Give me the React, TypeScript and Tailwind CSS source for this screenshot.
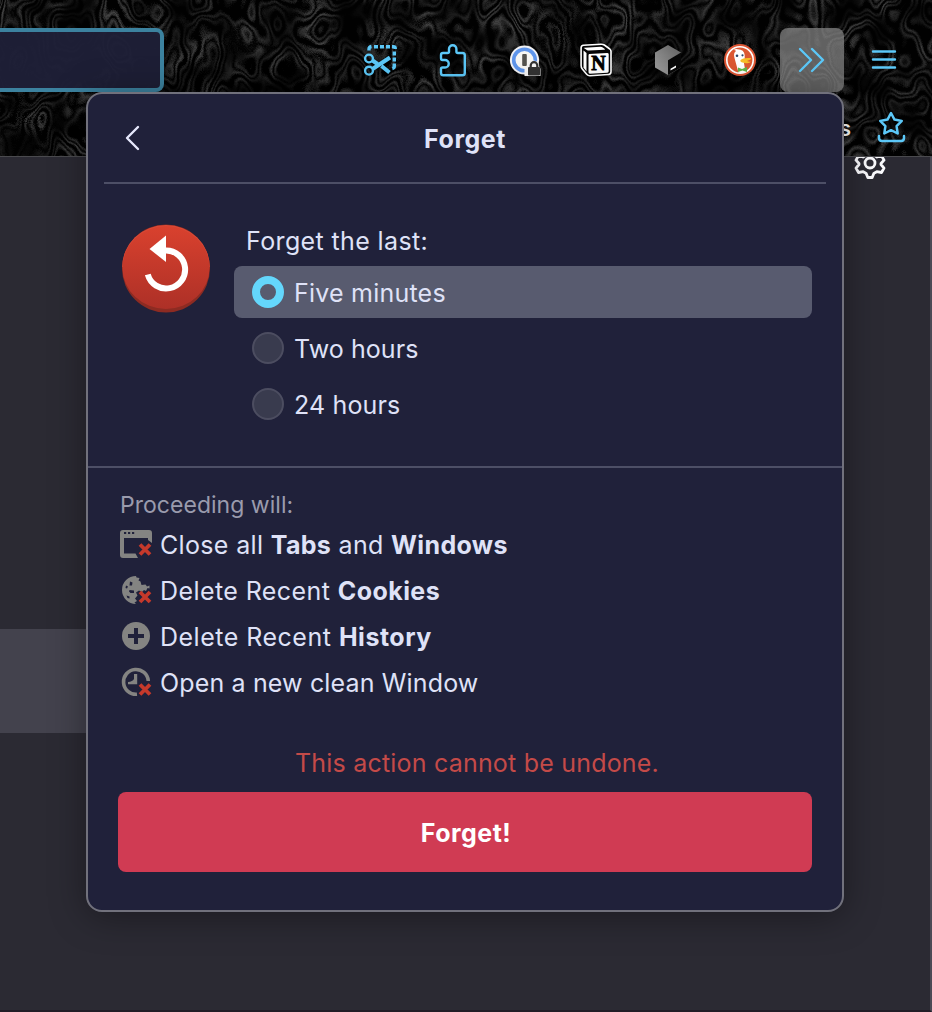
import type { ReactNode } from "react";

const BLUE = "#5cc8f8";

function Texture() {
  return (
    <svg className="absolute inset-0 h-full w-full" aria-hidden="true">
      <filter id="contours" x="0" y="0" width="100%" height="100%" colorInterpolationFilters="sRGB">
        <feTurbulence type="fractalNoise" baseFrequency="0.018 0.012" numOctaves="3" seed="11" />
        <feColorMatrix type="matrix" values="1 0 0 0 0  1 0 0 0 0  1 0 0 0 0  0 0 0 0 1" />
        <feComponentTransfer>
          <feFuncR type="table" tableValues="0 0 0 0 0 0 0 .3 0 0 .25 0 .35 0 0 .3 0 .35 0 0 .3 0 .3 0 0 .35 0 .25 0 0 .3 0 0 0 0 0 0 0" />
          <feFuncG type="table" tableValues="0 0 0 0 0 0 0 .3 0 0 .25 0 .35 0 0 .3 0 .35 0 0 .3 0 .3 0 0 .35 0 .25 0 0 .3 0 0 0 0 0 0 0" />
          <feFuncB type="table" tableValues="0 0 0 0 0 0 0 .3 0 0 .25 0 .35 0 0 .3 0 .35 0 0 .3 0 .3 0 0 .35 0 .25 0 0 .3 0 0 0 0 0 0 0" />
        </feComponentTransfer>
        <feGaussianBlur stdDeviation="0.6" result="lines" />
        <feTurbulence type="fractalNoise" baseFrequency="0.03" numOctaves="2" seed="4" />
        <feColorMatrix type="matrix" values="2.6 0 0 0 -.8  2.6 0 0 0 -.8  2.6 0 0 0 -.8  0 0 0 0 1" result="shade" />
        <feComposite in="lines" in2="shade" operator="arithmetic" k1="0.65" k2="0.1" k3="0" k4="0" />
      </filter>
      <rect width="100%" height="100%" filter="url(#contours)" />
    </svg>
  );
}

function ToolButton({ children, active = false }: { children: ReactNode; active?: boolean }) {
  return (
    <button
      className={
        active
          ? "flex size-16 items-center justify-center rounded-lg bg-[#8a8a8a]/70"
          : "flex size-16 items-center justify-center rounded-lg"
      }
    >
      {children}
    </button>
  );
}

function ScissorsIcon() {
  return (
    <svg width="36" height="36" viewBox="0 0 36 36" fill="none" stroke={BLUE}>
      <path d="M7 8.500V7q0-2 2.500-2.500M12 4.700h4M18 4.700h4M24 4.700h4M30 4.700h1.500q1.800 0 1.800 2.300M32.300 9.500v4M32.300 15.500v4M32.300 21.500v3q0 1.500-2 2" strokeWidth="3.400" />
      <circle cx="7" cy="16.500" r="3.900" strokeWidth="2.400" />
      <circle cx="7" cy="28.700" r="3.900" strokeWidth="2.400" />
      <path d="M10.500 18.500l5 3.500M10.500 27l17.500-11.500M19.500 24l8 6.500" strokeWidth="4" />
    </svg>
  );
}

function PuzzleIcon() {
  return (
    <svg width="36" height="36" viewBox="0 0 36 36" fill="none" stroke={BLUE} strokeWidth="2.400" strokeLinejoin="round">
      <path d="M7 16v-3q0-2 2-2h4.500q1.500 0 1.500-1.500V7a3.700 3.700 0 0 1 7.400 0v2.500q0 1.500 1.500 1.500h4.600q2.300 0 2.300 2.300v17.700q0 2.300-2.300 2.300H9.300Q7 33.300 7 31v-4q0-1.500 1.500-1.500H11a3.700 3.700 0 0 0 0-7.500H8.500Q7 18 7 16z" />
    </svg>
  );
}

function PasswordIcon() {
  return (
    <svg width="36" height="36" viewBox="0 0 36 36">
      <circle cx="18.500" cy="18" r="14.600" fill="#f1f1f3" />
      <circle cx="18.500" cy="18" r="10.800" fill="#f7f6f3" stroke="#5f95ea" strokeWidth="3.600" />
      <rect x="16.200" y="12" width="4.600" height="12" rx="1" fill="#54534f" />
      <path d="M18.500 34v-6.500q0-2 3-2 .5-7 6-7t6 7q1 0 1 2V34z" fill="#f5f5f5" />
      <path d="M24.700 26v-2.500a3.300 3.300 0 0 1 6.600 0V26" fill="none" stroke="#333" strokeWidth="2.200" />
      <rect x="22" y="25" width="12" height="8.500" rx="1" fill="#333" />
    </svg>
  );
}

function NotionIcon() {
  return (
    <svg width="36" height="36" viewBox="0 0 36 36">
      <path d="M5.500 3.300L23 2.200q2-.1 3.300.8l5.500 4q1.200 1 1.200 2.500v20.300q0 2.500-2.500 2.700L12 33.700q-2 .1-3.100-1.200L4.300 27q-1.200-1.500-1.200-3.500V5.800q0-2.300 2.400-2.500z" fill="#050505" stroke="#fff" strokeWidth="1.600" />
      <path d="M6.500 5.700l16-1q1.300 0 2.300.7l2 1.500q.8.700-.6.800L11 8.600q-1.300 0-2.200-.7L6.200 6.300q-.7-.5.300-.6z" fill="#fff" />
      <path d="M11.200 12l18-1.100q1.500 0 1.500 1.400v17q0 1.300-1.400 1.400l-17.300 1q-1.500.1-1.500-1.400V13.400q0-1.300.7-1.400z" fill="#fff" />
      <path d="M5.500 8.500l3 2.500v18.500l-3-3.700z" fill="#fff" />
      <text x="20.500" y="28.200" textAnchor="middle" fontFamily="Liberation Serif, serif" fontWeight="700" fontSize="20" stroke="#000" strokeWidth=".8">N</text>
    </svg>
  );
}

function CubeIcon() {
  return (
    <svg width="36" height="36" viewBox="0 0 36 36">
      <defs>
        <linearGradient id="cube" x1="1" y1="0" x2="0" y2="1">
          <stop offset="0" stopColor="#606060" />
          <stop offset="1" stopColor="#a0a0a0" />
        </linearGradient>
      </defs>
      <path d="M18 3l13 7.500v15L18 33 5 25.500v-15z" fill="url(#cube)" />
      <path d="M31 10.500v15L18 33V18.200z" fill="#080808" />
      <path d="M20.500 26.700l5.500-3.200v2l-5.500 3z" fill="#fff" />
    </svg>
  );
}

function DuckIcon() {
  return (
    <svg width="36" height="36" viewBox="0 0 36 36">
      <circle cx="18" cy="18" r="16" fill="#dd5634" />
      <circle cx="18" cy="18" r="13.200" fill="#dc5832" stroke="#fff" strokeWidth="1.600" />
      <path d="M16.500 30.700L12.500 16q-1.500-5 1.500-7-1-1.200-2.300-1 2-1.500 4-.8 6.500 0 7 6 .3 4-.7 8l1.500 9q-2.500 1.500-7 .5z" fill="#fff" />
      <circle cx="15" cy="13.800" r="1.300" fill="#2c4569" />
      <circle cx="20.500" cy="13.300" r="1.100" fill="#2c4569" />
      <path d="M18.500 18q2.500-2.500 9.500-2 2.500.3 0 1.800l-3 1.200q2 .8 4 .6-1.500 2.500-6.500 1.400-5-.600-4-3z" fill="#f8bd28" />
      <path d="M16 25.500l4 1.500 5-2v5l-4.500-1.500L16 30z" fill="#60b548" />
    </svg>
  );
}

function ResetIcon() {
  return (
    <svg className="mt-10 ml-[34px] shrink-0" width="88" height="90" viewBox="0 0 88 90">
      <defs>
        <linearGradient id="red" x1="0" y1="0" x2="0" y2="1">
          <stop offset="0" stopColor="#d9412e" />
          <stop offset="1" stopColor="#ad3027" />
        </linearGradient>
      </defs>
      <circle cx="44" cy="44.500" r="44" fill="#8d2b22" />
      <path d="M.2 43a43.800 42 0 0 1 87.600 0z" fill="#d94b38" />
      <ellipse cx="44" cy="43.500" rx="43.600" ry="41.500" fill="url(#red)" />
      <path d="M43.500 26.500A19 19 0 1 1 25.800 50.500" fill="none" stroke="#fff" strokeWidth="6" />
      <path d="M27.500 25L44 11.500v26.500z" fill="#fff" />
    </svg>
  );
}

function RedCross() {
  return <path d="M20 16.500l10 10M30 16.500l-10 10" stroke="#c6392b" strokeWidth="3.800" />;
}

function TabsIcon() {
  return (
    <svg className="shrink-0" width="32" height="32" viewBox="0 0 32 32">
      <path fillRule="evenodd" fill="#848482" d="M3 2h26q3 0 3 3v10l-4-3V10H4v15.500h11.500L18 30H3q-3 0-3-3V5q0-3 3-3z" />
      <path d="M4 4h2.200v2H4zM8 4h2.200v2H8zM12 4h2.200v2H12z" fill="#20213a" />
      <g><RedCross /></g>
    </svg>
  );
}

function CookieIcon() {
  return (
    <svg className="shrink-0" width="32" height="32" viewBox="0 0 32 32">
      <path fill="#848482" d="M16 2A14 14 0 0 0 16 30l-1.500-1.500 2.500-1.500-2-2.500 2.500-3-1.500-3 3-2 3 1.500 2-2 2 1 1.500-3 2 .5v-3l-2.500 1-1.500-2-4 .5-1-3.500-2-1 1-2.500-3-.5z" />
      <path fill="#20213a" d="M10 7.500l2.500 1-.5 3H9.500zM6 11.500l2 1-1 2-1.500-.5zM9.500 16l4.500.5V19h-3.500L9 17.500zM6.500 21.500l3 1v2l-2-.5z" />
      <g transform="translate(0 1.500)"><RedCross /></g>
    </svg>
  );
}

function PlusIcon() {
  return (
    <svg className="shrink-0" width="32" height="32" viewBox="0 0 32 32">
      <circle cx="16" cy="16" r="14" fill="#848482" />
      <path d="M16 8v16M8 16h16" stroke="#20213a" strokeWidth="4" />
    </svg>
  );
}

function ClockIcon() {
  return (
    <svg className="shrink-0" width="32" height="32" viewBox="0 0 32 32">
      <path d="M28.300 15A12.400 12.400 0 1 0 17 28.200" fill="none" stroke="#848482" strokeWidth="3.600" />
      <path d="M14 8h3.200v10.200H8V16q4.500-.3 6-3z" fill="#848482" />
      <g transform="translate(0 2)"><RedCross /></g>
    </svg>
  );
}

function Option({ label, tracking, selected = false }: { label: string; tracking: string; selected?: boolean }) {
  return (
    <label className={selected ? "flex h-[52px] items-center rounded-lg bg-[#585b6f] pl-[18px]" : "flex h-[52px] items-center rounded-lg pl-[18px]"}>
      <span
        className={
          selected
            ? "size-8 shrink-0 rounded-full border-8 border-[#64d7fc] bg-[#585b6f]"
            : "size-8 shrink-0 rounded-full border-2 border-[#4c4d60] bg-[#393b4e]"
        }
      />
      <span className={`ml-2.5 pt-0.5 ${tracking}`}>{label}</span>
    </label>
  );
}

function Effect({ icon, tracking, children }: { icon: ReactNode; tracking: string; children: ReactNode }) {
  return (
    <li className="flex h-[46px] items-center">
      {icon}
      <span className={`ml-2 pt-px whitespace-pre ${tracking}`}>{children}</span>
    </li>
  );
}

function ForgetPanel() {
  return (
    <section className="absolute top-[92px] left-[86px] flex h-[820px] w-[758px] flex-col rounded-2xl border-2 border-[#71717c] bg-[#20213a] text-[25px] leading-8 font-[430] text-[#dfe2f7] shadow-[0_4px_36px_rgba(0,0,0,0.38)]">
      <header className="mx-4 flex h-[90px] items-center border-b-2 border-[#4d4f66]">
        <svg className="ml-5 shrink-0" width="18" height="28" viewBox="0 0 18 28" fill="none" stroke="#e6e8fb" strokeWidth="2.400" strokeLinecap="round" strokeLinejoin="round">
          <path d="M14 3L3 14l11 11" />
        </svg>
        <h1 className="mr-[38px] flex-1 pt-px text-center font-bold tracking-[0.55px]">Forget</h1>
      </header>
      <div className="flex h-[284px] border-b-2 border-[#4d4f66]">
        <ResetIcon />
        <div className="mt-[41px] mr-[30px] ml-6 flex flex-1 flex-col">
          <p className="mb-[9px] pl-3 tracking-[0.38px]">Forget the last:</p>
          <div className="flex flex-col gap-1">
            <Option label="Five minutes" tracking="tracking-[0.22px]" selected />
            <Option label="Two hours" tracking="tracking-[0.08px]" />
            <Option label="24 hours" tracking="tracking-[0.15px]" />
          </div>
        </div>
      </div>
      <div className="px-8 pt-[21px]">
        <p className="text-[23px] tracking-[0.03px] text-[#9a9bad]">Proceeding will:</p>
        <ul>
          <Effect icon={<TabsIcon />} tracking="tracking-[0.34px]">Close all <b className="font-bold">Tabs</b> and <b className="font-bold">Windows</b></Effect>
          <Effect icon={<CookieIcon />} tracking="tracking-[0.42px]">Delete Recent <b className="font-bold">Cookies</b></Effect>
          <Effect icon={<PlusIcon />} tracking="tracking-[0.5px]">Delete Recent <b className="font-bold">History</b></Effect>
          <Effect icon={<ClockIcon />} tracking="tracking-[0.15px]">Open a new clean Window</Effect>
        </ul>
      </div>
      <p className="mt-[42px] pl-6 text-center tracking-[0.2px] text-[#c44a48]">This action cannot be undone.</p>
      <button className="mx-[30px] mt-[13px] h-20 shrink-0 rounded-lg bg-[#d03b53] pt-0.5 pl-0.5 font-bold tracking-[0.45px] text-white">Forget!</button>
    </section>
  );
}

export default function App() {
  return (
    <div className="relative flex h-[1012px] w-[932px] flex-col overflow-hidden bg-[#2b2a33] font-['Inter',sans-serif]">
      <div className="relative h-[157px] shrink-0 overflow-hidden border-b border-[#4a4a4e] bg-[#050505]">
        <Texture />
        <div className="relative flex h-[92px] items-start justify-between pt-7 pr-4">
          <div className="h-16 w-[164px] rounded-r-lg border-4 border-l-0 border-[#3c829f] bg-[#1f2038]/95" />
          <div className="flex gap-2">
            <ToolButton><ScissorsIcon /></ToolButton>
            <ToolButton><PuzzleIcon /></ToolButton>
            <ToolButton><PasswordIcon /></ToolButton>
            <ToolButton><NotionIcon /></ToolButton>
            <ToolButton><CubeIcon /></ToolButton>
            <ToolButton><DuckIcon /></ToolButton>
            <ToolButton active>
              <svg className="mr-0.5" width="28" height="28" viewBox="0 0 28 28" fill="none" stroke={BLUE} strokeWidth="2.400" strokeLinecap="round" strokeLinejoin="round">
                <path d="M3 3l11 11L3 25M15 3l11 11L15 25" />
              </svg>
            </ToolButton>
            <ToolButton>
              <svg width="26" height="24" viewBox="0 0 26 24" stroke={BLUE} strokeWidth="2.400" strokeLinecap="round">
                <path d="M2 3.500h22M2 11.500h22M2 19.500h22" />
              </svg>
            </ToolButton>
          </div>
        </div>
        <div className="relative flex h-16 items-center justify-end gap-6 pr-[25px]">
          <span className="mt-2.5 text-[21px] font-semibold text-white">s</span>
          <svg className="mt-2" width="32" height="36" viewBox="0 0 32 36" fill="none" stroke={BLUE} strokeWidth="2.500" strokeLinejoin="round" strokeLinecap="round">
            <path d="M16 4l3.500 6.600 7.300 1.300-5.200 5.300 1.100 7.300L16 21.200l-6.700 3.300 1.100-7.300-5.200-5.300 7.300-1.300z" transform="translate(0 -1)" />
            <path d="M4 26v2q0 3 3 3h19q3 0 3-3v-2" />
          </svg>
        </div>
      </div>
      <main className="flex flex-1 flex-col border-r-2 border-b-2 border-r-[#4b4a55] border-b-[#211d26]">
        <div className="flex h-[472px] justify-end overflow-hidden pr-11">
          <svg className="-mt-2 shrink-0" width="32" height="32" viewBox="0 0 32 32" fill="none" stroke="#fbfbfe" strokeWidth="2.800" strokeLinejoin="round">
            <circle cx="16" cy="14" r="5" />
            <path d="M13 3l-1.200 3.400-2.800 1.600-4.500-1.300-2.500 4.400 3 3.400v1l-3 3.600 2.500 4.400 4.700-.8 3 1.700 1.600 4.100h4.400l1.600-4.100 3-1.700 4.700.8 2.500-4.400-3-3.600v-1l3-3.400-2.500-4.400-4.500 1.300-2.800-1.600L19 3z" />
          </svg>
        </div>
        <div className="h-[104px] w-[200px] bg-[#43424d]" />
      </main>
      <ForgetPanel />
    </div>
  );
}
